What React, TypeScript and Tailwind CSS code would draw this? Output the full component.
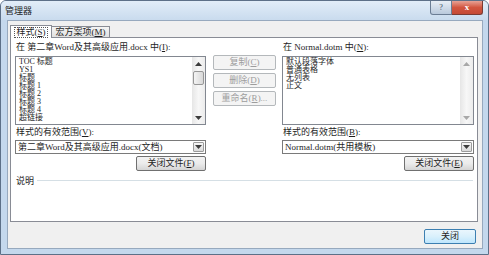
import type { ReactNode } from 'react';

const FONT = "font-['Liberation_Serif','Noto_Sans_CJK_SC',serif]";

function U({ children }: { children: ReactNode }) {
  return <span className="underline underline-offset-1">{children}</span>;
}

function Arrow({ dir, dim }: { dir: 'up' | 'down'; dim?: boolean }) {
  return (
    <svg width="7" height="4" viewBox="0 0 7 4" className="block">
      <path d={dir === 'up' ? 'M0 4 L3.5 0 L7 4Z' : 'M0 0 L7 0 L3.5 4Z'} fill={dim ? '#a8a8a8' : '#3c3c3c'} />
    </svg>
  );
}

function ScrollBar({ thumb }: { thumb?: boolean }) {
  return (
    <div className="w-[13px] flex flex-col bg-gradient-to-r from-[#e6e6e6] via-[#f7f7f7] to-[#ececec]">
      <div className="h-[13px] flex items-center justify-center">
        <Arrow dir="up" dim={!thumb} />
      </div>
      {thumb ? (
        <div className="mt-[1px] mx-[1px] h-[14px] rounded-[2px] border border-[#979797] bg-gradient-to-r from-[#f4f4f4] to-[#d8d8d8]" />
      ) : null}
      <div className="flex-1" />
      <div className="h-[13px] flex items-center justify-center">
        <Arrow dir="down" dim={!thumb} />
      </div>
    </div>
  );
}

function ListBox({ items, thumb }: { items: string[]; thumb?: boolean }) {
  return (
    <div className="h-[69px] border border-[#828790] bg-white flex overflow-hidden">
      <div className="flex-1 pl-[3px] pt-[1px] text-[8px] leading-[8px] text-[#1e1e1e] overflow-hidden">
        {items.map((t) => (
          <div key={t} className="h-[8px] whitespace-nowrap">
            {t}
          </div>
        ))}
      </div>
      <ScrollBar thumb={thumb} />
    </div>
  );
}

function Combo({ children }: { children: ReactNode }) {
  return (
    <div className="h-[14px] border border-[#7a7a7a] bg-white flex items-center">
      <span className="flex-1 pl-[2px] text-[9px] leading-none whitespace-nowrap text-[#1e1e1e]">{children}</span>
      <div className="w-[11px] h-[10px] mr-[1px] border border-[#9c9c9c] rounded-[1px] bg-gradient-to-b from-[#f6f6f6] to-[#dadada] flex items-center justify-center">
        <Arrow dir="down" />
      </div>
    </div>
  );
}

function Btn({ children, disabled, className = '' }: { children: ReactNode; disabled?: boolean; className?: string }) {
  return (
    <div
      className={`h-[15px] flex items-center justify-center rounded-[2px] border text-[9px] leading-none whitespace-nowrap ${
        disabled
          ? 'border-[#b4b8bb] bg-[#f4f4f4] text-[#9d9d9d]'
          : 'border-[#707070] bg-gradient-to-b from-[#f3f3f3] via-[#ebebeb] to-[#d4d4d4] text-[#1e1e1e]'
      } ${className}`}
    >
      {children}
    </div>
  );
}

export default function App() {
  return (
    <div className={`w-[489px] h-[255px] flex flex-col border border-[#5d7088] rounded-t-[6px] overflow-hidden bg-[#c4d8ed] ${FONT}`}>
      {/* Title bar */}
      <div className="h-[20px] flex items-start justify-between bg-gradient-to-b from-[#e2edf8] to-[#c9dbee]">
        <span className="pl-[4px] pt-[5px] text-[9px] leading-[10px] text-[#1e1e1e]">管理器</span>
        <div className="flex mr-[5px]">
          <div className="w-[22px] h-[14px] rounded-bl-[3px] border border-t-0 border-[#6b7d94] bg-gradient-to-b from-[#e8eef5] to-[#b9c9dc] flex items-center justify-center text-[8px] leading-none text-[#3a4a5e]">
            ?
          </div>
          <div className="w-[31px] h-[14px] rounded-br-[3px] border border-t-0 border-l-0 border-[#7a3b33] bg-gradient-to-b from-[#e6a195] via-[#d2553f] to-[#c44a35] flex items-center justify-center text-[9px] leading-none text-white font-bold">
            x
          </div>
        </div>
      </div>

      <div className="flex-1 flex">
        <div className="w-[6px]" />
        {/* Client area */}
        <div className="flex-1 flex flex-col border border-[#97a9be] bg-[#f0f0f0] pl-[2px] pr-[4px] pt-[3px] pb-[4px]">
          {/* Tabs */}
          <div className="h-[13px] flex items-end">
            <div className="relative z-10 w-[42px] h-[13px] -mb-[1px] bg-white border border-b-0 border-[#898c95] flex items-start justify-center pt-[1px]">
              <span className="border border-dotted border-[#555] px-[1px] text-[9px] leading-[9px] text-[#1e1e1e]">
                样式(<U>S</U>)
              </span>
            </div>
            <div className="w-[58px] h-[11px] border border-b-0 border-l-0 border-[#898c95] bg-gradient-to-b from-[#f4f4f4] to-[#e1e1e1] flex items-center justify-center text-[9px] leading-none text-[#1e1e1e]">
              宏方案项(<U>M</U>)
            </div>
          </div>

          {/* Panel */}
          <div className="h-[185px] border border-[#898c95] bg-white flex flex-col pl-[4px] pr-[3px] pt-[4px]">
            <div className="flex">
              {/* Left column */}
              <div className="w-[191px] flex flex-col">
                <div className="h-[10px] pl-[1px] text-[9px] leading-[10px] text-[#1e1e1e] whitespace-nowrap">
                  在 第二章Word及其高级应用.docx 中(<U>I</U>):
                </div>
                <div className="mt-[4px]">
                  <ListBox thumb items={['TOC 标题', 'YS1', '标题', '标题 1', '标题 2', '标题 3', '标题 4', '超链接']} />
                </div>
                <div className="mt-[2px] h-[10px] pl-[1px] text-[9px] leading-[10px] text-[#1e1e1e]">
                  样式的有效范围(<U>V</U>):
                </div>
                <div className="mt-[3px]">
                  <Combo>第二章Word及其高级应用.docx(文档)</Combo>
                </div>
                <div className="mt-[2px] flex justify-end">
                  <Btn className="w-[70px]">
                    关闭文件(<U>F</U>)
                  </Btn>
                </div>
              </div>

              {/* Middle buttons */}
              <div className="ml-[7px] w-[63px] pt-[13px] flex flex-col gap-[3px]">
                <Btn disabled>
                  复制(<U>C</U>)
                </Btn>
                <Btn disabled>
                  删除(<U>D</U>)
                </Btn>
                <Btn disabled>
                  重命名(<U>R</U>)...
                </Btn>
              </div>

              {/* Right column */}
              <div className="ml-[6px] w-[192px] flex flex-col">
                <div className="h-[10px] pl-[1px] text-[9px] leading-[10px] text-[#1e1e1e] whitespace-nowrap">
                  在 Normal.dotm 中(<U>N</U>):
                </div>
                <div className="mt-[4px]">
                  <ListBox items={['默认段落字体', '普通表格', '无列表', '正文']} />
                </div>
                <div className="mt-[2px] h-[10px] pl-[1px] text-[9px] leading-[10px] text-[#1e1e1e]">
                  样式的有效范围(<U>B</U>):
                </div>
                <div className="mt-[3px]">
                  <Combo>Normal.dotm(共用模板)</Combo>
                </div>
                <div className="mt-[2px] flex justify-end">
                  <Btn className="w-[70px]">
                    关闭文件(<U>E</U>)
                  </Btn>
                </div>
              </div>
            </div>

            {/* Description group */}
            <div className="mt-[5px] h-[10px] flex items-center">
              <span className="pl-[1px] text-[9px] leading-[10px] text-[#1e1e1e]">说明</span>
              <div className="flex-1 ml-[3px] mr-[1px] h-[2px] border-t border-[#d5dfe5] border-b-white" />
            </div>
          </div>

          {/* Bottom */}
          <div className="mt-[7px] flex justify-end pr-[2px]">
            <div className="w-[52px] h-[15px] rounded-[2px] border border-[#3c7fb1] bg-gradient-to-b from-[#eaf6fd] via-[#d9f0fc] to-[#bee6fd] flex items-center justify-center text-[9px] leading-none text-[#1e1e1e]">
              关闭
            </div>
          </div>
        </div>
        <div className="w-[5px]" />
      </div>
      <div className="h-[5px]" />
    </div>
  );
}
